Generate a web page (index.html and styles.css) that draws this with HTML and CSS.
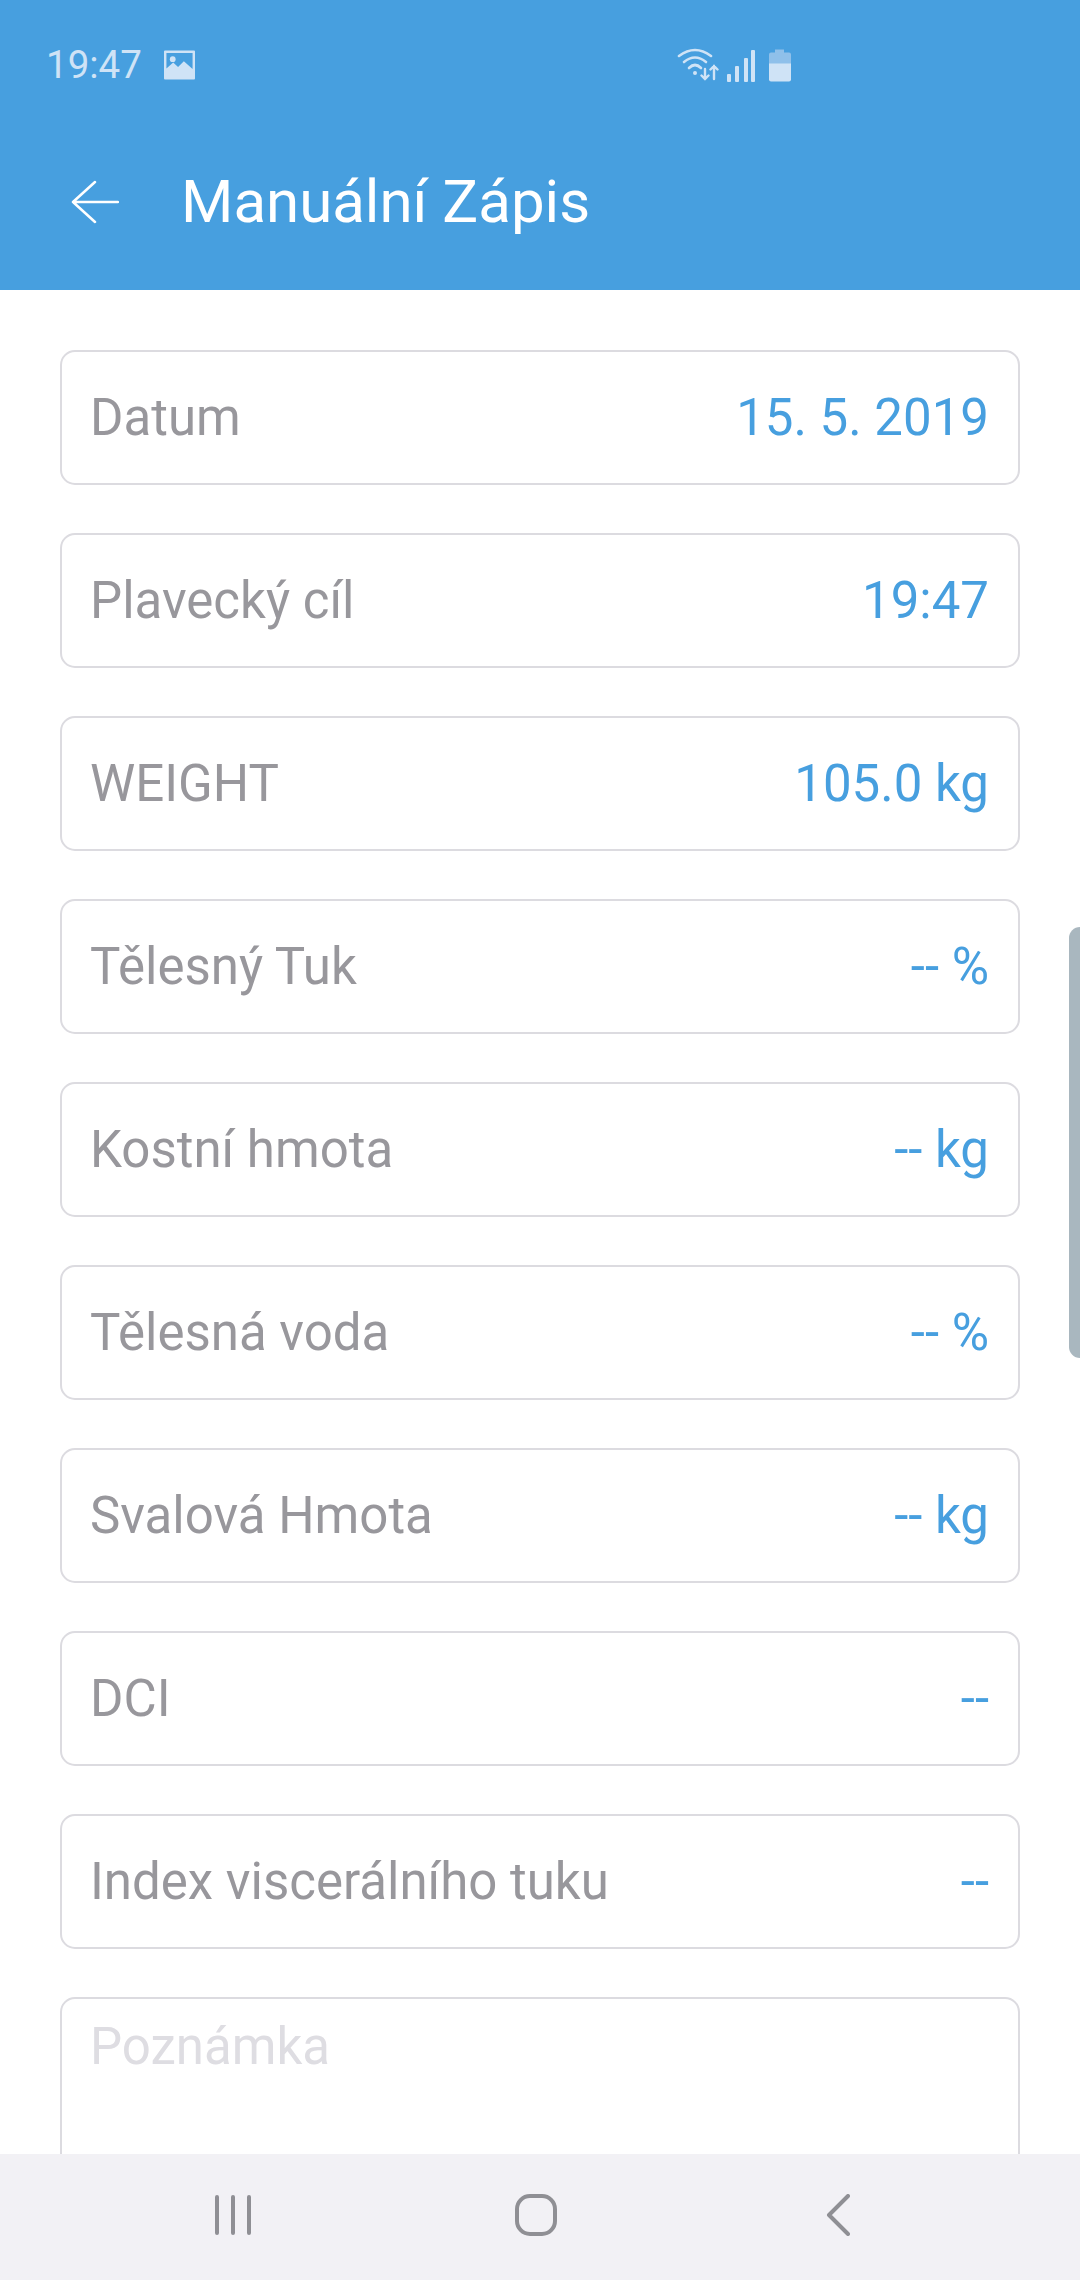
FILE: index.html
```html
<!DOCTYPE html>
<html lang="cs">
<head>
<meta charset="utf-8">
<title>Manuální Zápis</title>
<link rel="stylesheet" href="styles.css">
</head>
<body>
<div class="app">
  <header class="top">
    <div class="status">
      <div class="status-left">
        <span class="clock">19:47</span>
        <svg class="pic" width="31" height="30" viewBox="0 0 32 30"><path fill="#cfe3f6" fill-rule="evenodd" d="M1 0h30a1 1 0 0 1 1 1v28a1 1 0 0 1-1 1H1a1 1 0 0 1-1-1V1a1 1 0 0 1 1-1zM2.500 2.500v16l7-6 5 4.500 6-6 9 8V2.500z"/><circle cx="9" cy="9" r="3" fill="#cfe3f6"/></svg>
      </div>
      <div class="status-right">
        <svg width="42" height="34" viewBox="0 0 42 34" fill="none" stroke="#cfe3f6" stroke-linecap="round"><path stroke-width="2.600" d="M2 8Q18-4 34 8"/><path stroke-width="2.600" d="M7 14Q18 5 29 14"/><path stroke-width="2.600" d="M12 20Q18 14 24 20"/><circle cx="18" cy="25" r="2" fill="#cfe3f6" stroke="none"/><path stroke-width="2.400" d="M28 21v10m-3.500-3.500L28 31l3.500-3.500M37 31V18m-3.500 3.500L37 18l3.500 3.500"/></svg>
        <svg class="bars" width="28" height="32" viewBox="0 0 28 32" fill="#cfe3f6"><rect x="0" y="24" width="4" height="8" rx="1"/><rect x="8" y="16" width="4" height="16" rx="1"/><rect x="17" y="8" width="4" height="24" rx="1"/><rect x="24" y="0" width="4" height="32" rx="1"/></svg>
        <svg class="batt" width="22" height="33" viewBox="0 0 22 32"><path fill="#8fc0ea" d="M6 0h9v3h5a2 2 0 0 1 2 2v11H0V5a2 2 0 0 1 2-2h4z"/><path fill="#cfe3f6" d="M0 14h22v16a2 2 0 0 1-2 2H2a2 2 0 0 1-2-2z"/></svg>
      </div>
    </div>
    <div class="appbar">
      <svg class="back" width="48" height="44" viewBox="0 0 48 44" fill="none" stroke="#fff" stroke-width="2.500" stroke-linecap="round" stroke-linejoin="round"><path d="M24 2 2 22l22 20M2 22h45"/></svg>
      <h1 class="title">Manuální Zápis</h1>
    </div>
  </header>

  <main class="form">
    <div class="row"><span class="label">Datum</span><span class="value">15. 5. 2019</span></div>
    <div class="row"><span class="label">Plavecký cíl</span><span class="value">19:47</span></div>
    <div class="row"><span class="label">WEIGHT</span><span class="value">105.0 kg</span></div>
    <div class="row"><span class="label">Tělesný Tuk</span><span class="value">-- %</span></div>
    <div class="row"><span class="label">Kostní hmota</span><span class="value">-- kg</span></div>
    <div class="row"><span class="label">Tělesná voda</span><span class="value">-- %</span></div>
    <div class="row"><span class="label">Svalová Hmota</span><span class="value">-- kg</span></div>
    <div class="row"><span class="label">DCI</span><span class="value">--</span></div>
    <div class="row"><span class="label">Index viscerálního tuku</span><span class="value">--</span></div>
    <div class="note"><span class="placeholder">Poznámka</span></div>
  </main>

  <div class="scrollbar"></div>

  <nav class="nav">
    <svg class="nav-recent" width="40" height="40" viewBox="0 0 40 40" fill="none" stroke="#8f8f94" stroke-width="4" stroke-linecap="round"><path d="M3 2v36M19 2v36M35 2v36"/></svg>
    <svg class="nav-home" width="42" height="42" viewBox="0 0 42 42" fill="none" stroke="#8f8f94" stroke-width="4"><rect x="2" y="2" width="38" height="38" rx="13"/></svg>
    <svg class="nav-back" width="24" height="42" viewBox="0 0 24 42" fill="none" stroke="#8f8f94" stroke-width="4" stroke-linecap="round" stroke-linejoin="round"><path d="M22 2 3 21l19 19"/></svg>
  </nav>
</div>
</body>
</html>
```

FILE: styles.css
```css
* { box-sizing: border-box; }
html, body { margin: 0; padding: 0; }
body { font-family: Roboto, "Liberation Sans", sans-serif; background: #fff; }

.app {
  position: relative;
  width: 1080px;
  height: 2280px;
  display: flex;
  flex-direction: column;
  overflow: hidden;
}

.top { height: 290px; flex: none; background: #479fdf; color: #fff; }

.status {
  height: 130px;
  padding: 0 289px 0 46px;
  display: flex;
  align-items: center;
  justify-content: space-between;
}
.status-left { display: flex; align-items: center; gap: 22px; }
.clock { font-size: 38.500px; color: #cfe3f6; line-height: 1; }
.status-right { display: flex; align-items: flex-end; gap: 8px; }
.batt { margin-left: 6px; }

.appbar {
  height: 144px;
  padding-left: 71px;
  display: flex;
  align-items: center;
  gap: 62px;
}
.title { margin: 0; font-size: 60px; font-weight: 400; line-height: 1; }

.form {
  flex: 1;
  min-height: 0;
  padding: 60px 60px 0;
  display: flex;
  flex-direction: column;
  gap: 48px;
  overflow: hidden;
}

.row {
  flex: none;
  height: 135px;
  padding: 0 29px 0 28px;
  display: flex;
  align-items: center;
  justify-content: space-between;
  border: 2px solid #dcdbe0;
  border-radius: 15px;
  font-size: 51px;
}
.label { color: #98979c; }
.value { color: #479fdf; }

.note {
  flex: none;
  height: 300px;
  padding: 18px 28px;
  border: 2px solid #dcdbe0;
  border-radius: 15px;
  font-size: 51px;
}
.placeholder { color: #dedde2; }

.scrollbar {
  position: absolute;
  top: 927px;
  right: 0;
  width: 11px;
  height: 431px;
  background: #a9b7bf;
  border-radius: 11px 0 0 11px;
}

.nav {
  flex: none;
  height: 126px;
  background: #f2f1f5;
  padding: 0 0 4px 214px;
  display: flex;
  align-items: center;
}
.nav-home { margin-left: 261px; }
.nav-back { margin-left: 269px; }
```
